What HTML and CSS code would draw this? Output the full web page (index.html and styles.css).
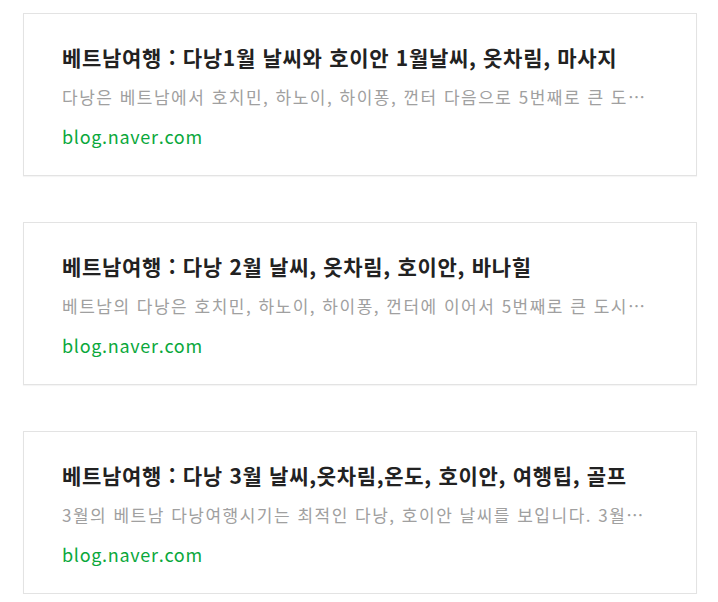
FILE: index.html
```html
<!DOCTYPE html>
<html lang="ko">
<head>
    <meta charset="UTF-8">
    <meta name="viewport" content="width=device-width, initial-scale=1.0">
    <title>베트남여행 다낭 날씨</title>
    <link rel="stylesheet" href="styles.css">
</head>
<body>
    <div class="list">
        <a class="card" href="#">
            <h3 class="card-title">베트남여행 : 다낭1월 날씨와 호이안 1월날씨, 옷차림, 마사지</h3>
            <p class="card-desc">다낭은 베트남에서 호치민, 하노이, 하이퐁, 껀터 다음으로 5번째로 큰 도시입니다. 1월의 다낭은 우기가 끝나가는 시기로</p>
            <span class="card-url">blog.naver.com</span>
        </a>
        <a class="card" href="#">
            <h3 class="card-title">베트남여행 : 다낭 2월 날씨, 옷차림, 호이안, 바나힐</h3>
            <p class="card-desc">베트남의 다낭은 호치민, 하노이, 하이퐁, 껀터에 이어서 5번째로 큰 도시입니다. 2월의 다낭은 건기가 시작되는</p>
            <span class="card-url">blog.naver.com</span>
        </a>
        <a class="card" href="#">
            <h3 class="card-title">베트남여행 : 다낭 3월 날씨,옷차림,온도, 호이안, 여행팁, 골프</h3>
            <p class="card-desc">3월의 베트남 다낭여행시기는 최적인 다낭, 호이안 날씨를 보입니다. 3월의 평균 기온은 25도 정도로</p>
            <span class="card-url">blog.naver.com</span>
        </a>
    </div>
</body>
</html>
```

FILE: styles.css
```css
body {
    margin: 0;
    background: #fff;
    font-family: "Noto Sans CJK KR", "Noto Sans", sans-serif;
}
.list {
    display: flex;
    flex-direction: column;
    gap: 46px;
    padding: 13px 21px 0 23px;
}
.card {
    display: block;
    height: 163px;
    box-sizing: border-box;
    padding: 26px 38px 0 38px;
    border: 1px solid #e3e3e3;
    box-shadow: 0 1px 1px rgba(0, 0, 0, 0.04);
    text-decoration: none;
    background: #fff;
}
.card-title {
    margin: 0;
    font-size: 21px;
    line-height: 34px;
    font-weight: 700;
    color: #222;
    letter-spacing: 0.7px;
    white-space: nowrap;
}
.card-desc {
    margin: 8px 0 0;
    font-size: 17px;
    line-height: 30px;
    color: #a0a0a0;
    white-space: nowrap;
    overflow: hidden;
    text-overflow: ellipsis;
    letter-spacing: 1.5px;
}
.card-url {
    display: block;
    margin-top: 10px;
    font-size: 18px;
    line-height: 28px;
    color: #0aa83c;
    letter-spacing: 0.7px;
}
```
